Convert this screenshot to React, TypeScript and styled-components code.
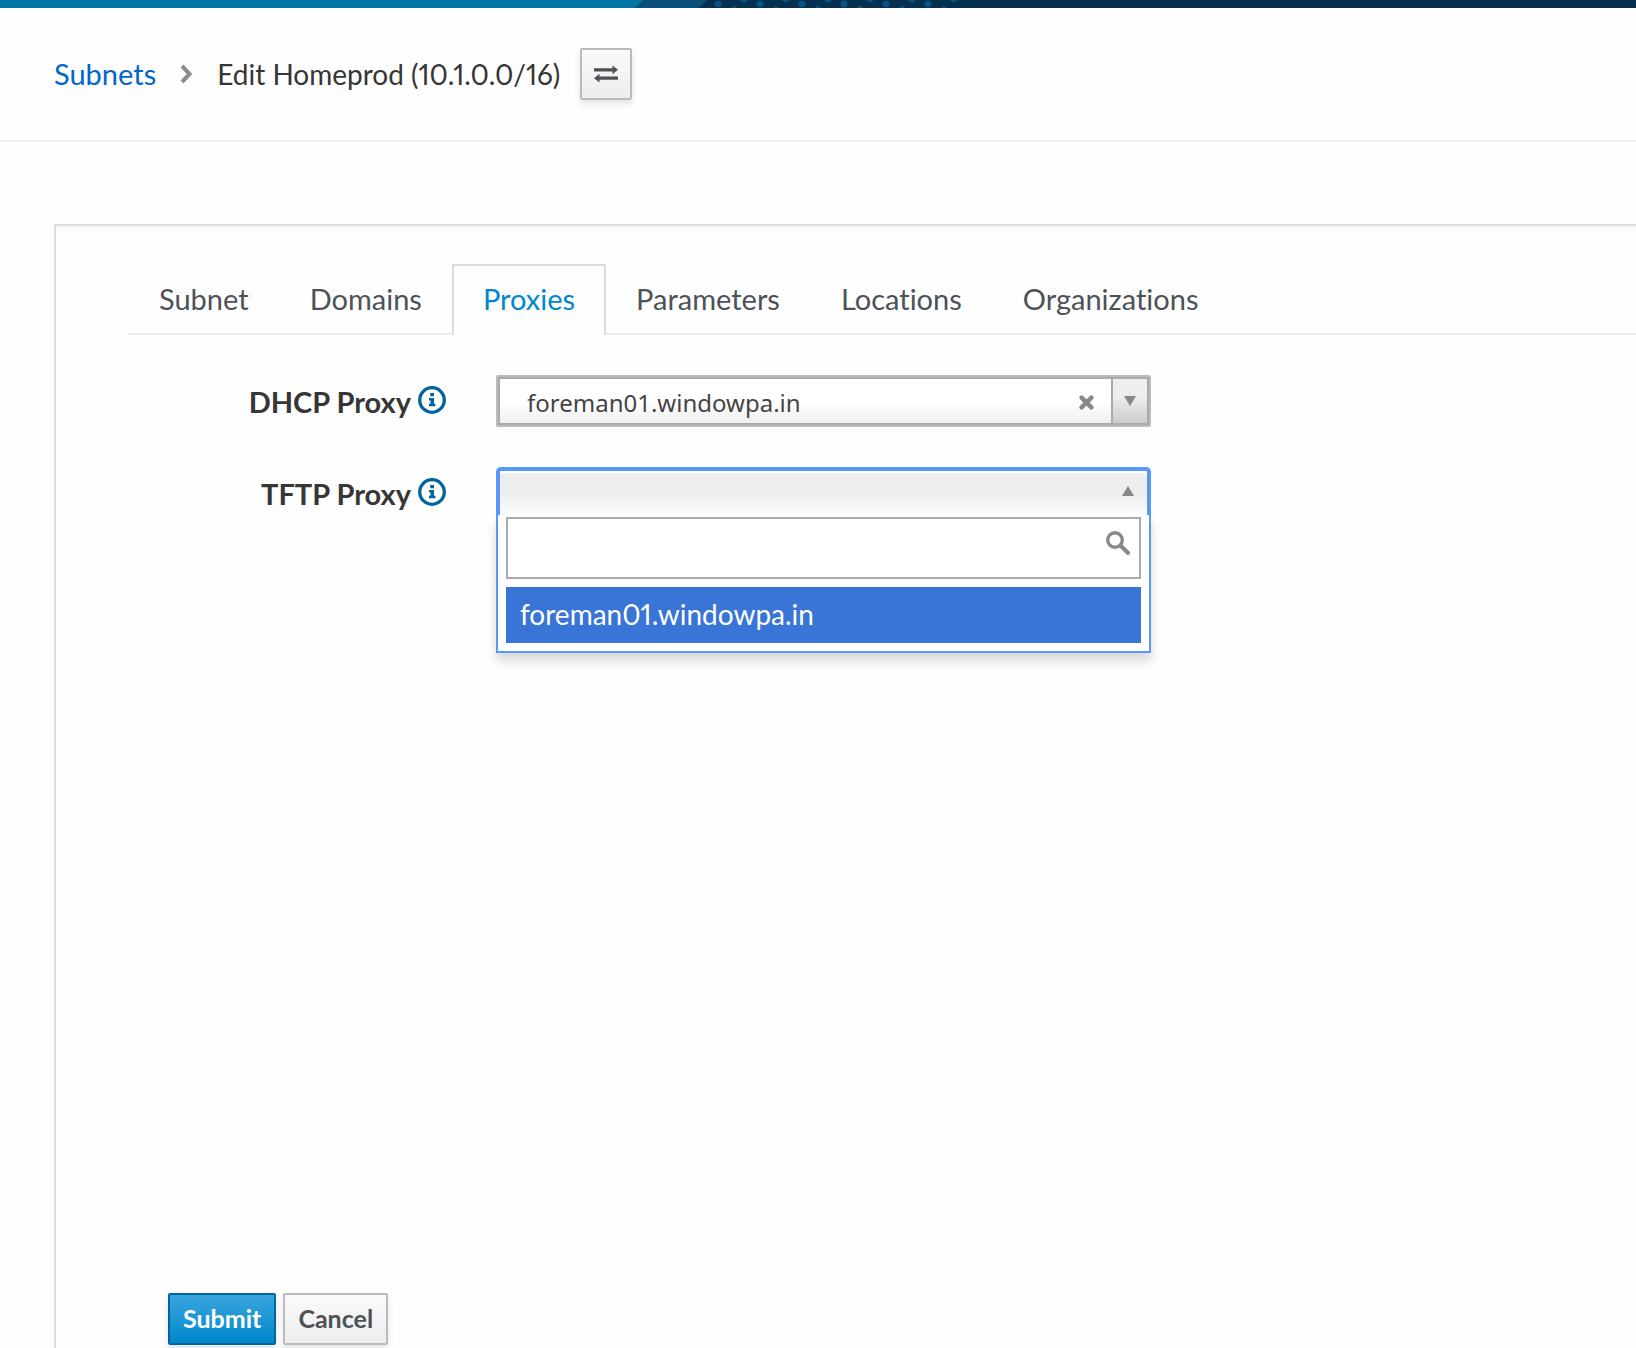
import React, { useState } from "react";
import styled, { createGlobalStyle } from "styled-components";

const GlobalStyle = createGlobalStyle`
  *, *::before, *::after { box-sizing: border-box; }
  body {
    margin: 0;
    background: #fefefe;
    color: #363636;
    font-family: Lato, "Open Sans", sans-serif;
    font-size: 29px;
    font-variant-ligatures: none;
    font-variant-numeric: proportional-nums;
    line-height: 36px;
  }
  button, input, select { font: inherit; color: inherit; margin: 0; }
`;

const Page = styled.div`
  display: flex;
  flex-direction: column;
  min-height: 100vh;
`;

const Masthead = styled.header`
  height: 8px;
  background: #06304f;
  svg { display: block; width: 100%; height: 8px; }
`;

const TitleBar = styled.div`
  display: flex;
  align-items: center;
  gap: 20px;
  padding: 40px 54px;
  border-bottom: 2px solid #f0f0f0;
`;

const Crumbs = styled.nav`
  display: flex;
  align-items: center;
  gap: 24px;
  a { color: #0066cc; text-decoration: none; }
  span { font-size: 28px; }
  svg { display: block; }
`;

const Button = styled.button<{ $primary?: boolean; $square?: boolean }>`
  display: flex;
  align-items: center;
  justify-content: center;
  width: ${(p) => (p.$square ? "52px" : "auto")};
  height: 52px;
  padding: ${(p) => (p.$square ? "0" : "0 13px 2px")};
  border: 2px solid ${(p) => (p.$primary ? "#00659c" : "#bbb")};
  border-radius: 2px;
  background: ${(p) =>
    p.$primary
      ? "linear-gradient(#39a5dc, #0088ce)"
      : "linear-gradient(#fafafa, #ededed)"};
  box-shadow: 0 4px 6px rgba(3, 3, 3, 0.1);
  && {
    color: ${(p) => (p.$primary ? "#fff" : "#4d5258")};
    font-size: 25px;
    font-weight: 700;
  }
`;

const Card = styled.main`
  display: flex;
  flex: 1;
  flex-direction: column;
  margin: 82px 0 0 54px;
  padding: 38px 0 3px 72px;
  border-top: 2px solid #dedede;
  border-left: 2px solid #dedede;
  box-shadow: inset 0 3px 3px -2px rgba(3, 3, 3, 0.08);
`;

const Tabs = styled.div`
  display: flex;
  border-bottom: 2px solid #ededed;
`;

const Tab = styled.button<{ $active: boolean }>`
  height: 71px;
  margin: 0 -1px -2px 0;
  padding: 0 29px 4px;
  border: 2px solid ${(p) => (p.$active ? "#dcdcdc" : "transparent")};
  border-bottom: 0;
  background: ${(p) => (p.$active ? "#fefefe" : "transparent")};
  && { color: ${(p) => (p.$active ? "#0088ce" : "#4d5258")}; }
`;

const Form = styled.form`
  display: flex;
  flex: 1;
  flex-direction: column;
  gap: 40px;
  padding-top: 40px;
`;

const Row = styled.div`
  display: grid;
  grid-template-columns: 318px minmax(0, 655px);
  column-gap: 50px;
  align-items: center;
`;

const LabelCell = styled.div`
  display: flex;
  align-items: center;
  justify-content: flex-end;
  gap: 7px;
  padding-top: 2px;
  label { font-weight: 700; }
`;

const InfoButton = styled.button`
  display: flex;
  padding: 0 0 4px;
  border: 0;
  background: none;
`;

const Picker = styled.div`
  display: flex;
  position: relative;
  height: 52px;
  border: 2px solid #bbb;
  border-radius: 2px;
  background: linear-gradient(#fff 50%, #eee);
  box-shadow: inset 0 0 0 2px #aaa;
`;

const Select = styled.select`
  flex: 1;
  min-width: 0;
  padding: 4px 0 0 29px;
  border: 0;
  outline: 0;
  appearance: none;
  background: transparent;
  && {
    color: #444;
    font-family: "Noto Sans", "Open Sans", sans-serif;
    font-size: 24px;
    font-variant-numeric: normal;
  }
`;

const ClearButton = styled.button`
  display: flex;
  align-items: center;
  padding: 2px 17px 0 16px;
  border: 0;
  background: none;
`;

const ArrowButton = styled.button`
  display: flex;
  align-items: center;
  justify-content: center;
  width: 36px;
  margin: 2px 2px 2px 0;
  padding: 0;
  border: 0;
  border-left: 2px solid #aaa;
  background: linear-gradient(#eee 40%, #ccc);
`;

const OpenPicker = styled.div`
  position: relative;
  height: 52px;
`;

const OpenToggle = styled.button`
  display: flex;
  align-items: center;
  justify-content: flex-end;
  width: 100%;
  height: 50px;
  padding: 0 13px 6px 0;
  border: 4px solid #5897fb;
  border-bottom: 0;
  border-radius: 5px 5px 0 0;
  background: linear-gradient(#eee 50%, #fff);
  box-shadow: inset 0 2px 0 #fff;
`;

const Dropdown = styled.div`
  position: absolute;
  top: 48px;
  left: 0;
  right: 0;
  padding: 2px 8px 8px;
  border: 2px solid #5897fb;
  border-top: 0;
  background: #fff;
  box-shadow: 0 8px 10px rgba(0, 0, 0, 0.15);
`;

const SearchBox = styled.div`
  display: flex;
  height: 62px;
  padding: 12px 9px 0 8px;
  border: 2px solid #aaa;
  background: #fff;
  input { flex: 1; min-width: 0; height: 34px; border: 0; outline: 0; background: none; }
`;

const Options = styled.ul`
  margin: 8px 0 0;
  padding: 0;
  list-style: none;
`;

const Option = styled.li`
  padding: 9px 14px 11px;
  background: #3875d7;
  color: #fff;
  font-size: 28px;
`;

const Actions = styled.div`
  display: flex;
  gap: 7px;
  margin-top: auto;
  padding-left: 40px;
`;

const InfoIcon = () => (
  <svg width="28" height="28" viewBox="0 0 28 28" aria-hidden="true">
    <circle cx="14" cy="14" r="12.3" fill="none" stroke="#00659c" strokeWidth="3.3" />
    <path d="M12.2 7h3.8v3.2h-3.8zM11 12h5v5.8h1.4v2.4H11v-2.4h1.5v-3.4H11z" fill="#00659c" />
  </svg>
);

const ChevronIcon = () => (
  <svg width="13" height="22" viewBox="0 0 13 22" aria-hidden="true">
    <path d="M2 3l7.6 8L2 19" fill="none" stroke="#8b8d8f" strokeWidth="4" />
  </svg>
);

const SwitchIcon = () => (
  <svg width="24" height="18" viewBox="0 0 24 18" aria-hidden="true">
    <path d="M0 3.2h18.5V.4L24 4.8l-5.5 4.4V6.4H0zM24 11.6H5.5V8.8L0 13.2l5.5 4.4v-2.8H24z" fill="#4d5258" />
  </svg>
);

const CrossIcon = () => (
  <svg width="15" height="15" viewBox="0 0 15 15" aria-hidden="true">
    <path d="M2.6 2.6l9.8 9.8M12.4 2.6l-9.8 9.8" stroke="#888" strokeWidth="4.4" strokeLinecap="round" />
  </svg>
);

const Triangle = ({ up = false }: { up?: boolean }) => (
  <svg width="12" height="10" viewBox="0 0 12 10" aria-hidden="true">
    <path d={up ? "M6 0l6 10H0z" : "M0 0h12L6 10z"} fill="#888" />
  </svg>
);

const SearchIcon = () => (
  <svg width="24" height="24" viewBox="0 0 24 24" aria-hidden="true">
    <circle cx="9" cy="9" r="7.3" fill="none" stroke="#888" strokeWidth="3.4" />
    <path d="M14.5 14.5l7.3 7.3" stroke="#888" strokeWidth="4.2" strokeLinecap="round" />
  </svg>
);

const dotColumns = [718, 760, 802, 844, 886, 928];
const tabNames = ["Subnet", "Domains", "Proxies", "Parameters", "Locations", "Organizations"];
const host = "foreman01.windowpa.in";

export default function App() {
  const [active, setActive] = useState("Proxies");
  const [dhcp, setDhcp] = useState(host);
  const [query, setQuery] = useState("");

  return (
    <Page>
      <GlobalStyle />
      <Masthead>
        <svg aria-hidden="true">
          <path d="M0 0H707L699 8H0z" fill="#09507d" />
          <path d="M0 0H643L635 8H0z" fill="#0076a5" />
          {dotColumns.map((x) => (
            <g key={x} fill="#0a5080">
              <circle cx={x} cy="4" r="3.5" />
              <circle cx={x + 16} cy="9" r="3" />
              <circle cx={x + 26} cy="-1" r="3.5" />
            </g>
          ))}
        </svg>
      </Masthead>
      <TitleBar>
        <Crumbs aria-label="Breadcrumb">
          <a href="#subnets">Subnets</a>
          <ChevronIcon />
          <span>Edit Homeprod (10.1.0.0/16)</span>
        </Crumbs>
        <Button type="button" $square aria-label="Switch subnet">
          <SwitchIcon />
        </Button>
      </TitleBar>
      <Card>
        <Tabs role="tablist">
          {tabNames.map((name) => (
            <Tab
              key={name}
              type="button"
              role="tab"
              aria-selected={name === active}
              $active={name === active}
              onClick={() => setActive(name)}
            >
              {name}
            </Tab>
          ))}
        </Tabs>
        <Form onSubmit={(e) => e.preventDefault()}>
          <Row>
            <LabelCell>
              <label htmlFor="dhcp">DHCP Proxy</label>
              <InfoButton type="button" aria-label="About DHCP Proxy"><InfoIcon /></InfoButton>
            </LabelCell>
            <Picker>
              <Select id="dhcp" value={dhcp} onChange={(e) => setDhcp(e.target.value)}>
                <option value="" />
                <option value={host}>{host}</option>
              </Select>
              <ClearButton type="button" aria-label="Clear" onClick={() => setDhcp("")}>
                <CrossIcon />
              </ClearButton>
              <ArrowButton type="button" aria-label="Open list"><Triangle /></ArrowButton>
            </Picker>
          </Row>
          <Row>
            <LabelCell>
              <label htmlFor="tftp">TFTP Proxy</label>
              <InfoButton type="button" aria-label="About TFTP Proxy"><InfoIcon /></InfoButton>
            </LabelCell>
            <OpenPicker>
              <OpenToggle id="tftp" type="button" aria-haspopup="listbox" aria-expanded="true">
                <Triangle up />
              </OpenToggle>
              <Dropdown>
                <SearchBox>
                  <input
                    type="text"
                    aria-label="Search proxies"
                    value={query}
                    onChange={(e) => setQuery(e.target.value)}
                  />
                  <SearchIcon />
                </SearchBox>
                <Options role="listbox" aria-label="TFTP Proxy">
                  <Option role="option" aria-selected="true">{host}</Option>
                </Options>
              </Dropdown>
            </OpenPicker>
          </Row>
          <Actions>
            <Button type="submit" $primary>Submit</Button>
            <Button type="button">Cancel</Button>
          </Actions>
        </Form>
      </Card>
    </Page>
  );
}
